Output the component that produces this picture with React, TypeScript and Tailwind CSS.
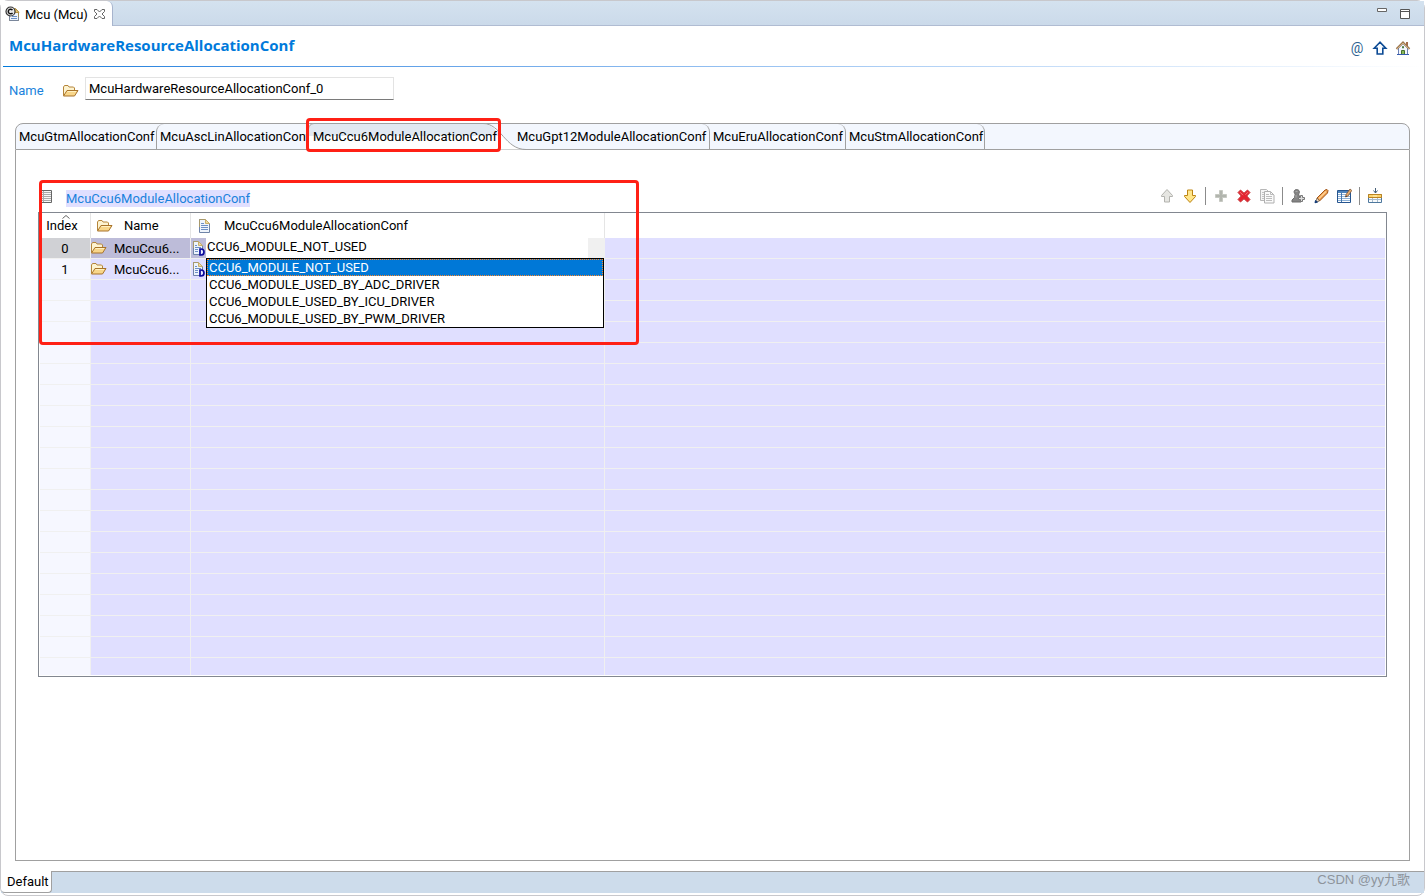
import { useState } from "react";
import type { ReactNode } from "react";

const usageOptions = [
  "CCU6_MODULE_NOT_USED",
  "CCU6_MODULE_USED_BY_ADC_DRIVER",
  "CCU6_MODULE_USED_BY_ICU_DRIVER",
  "CCU6_MODULE_USED_BY_PWM_DRIVER",
];

const emptyRows = Array.from({ length: 19 }, (_, i) => i + 2);

function Icon({ children, className = "" }: { children: ReactNode; className?: string }) {
  return (
    <svg
      viewBox="0 0 16 16"
      className={`h-4 w-4 shrink-0 ${className}`}
      fill="none"
      aria-hidden="true"
    >
      {children}
    </svg>
  );
}

function FolderIcon() {
  return (
    <Icon>
      <path d="M.5 12.500V4l1-1.500h3.500l1 1.500h4.500l1 1v2.500" fill="#fdf3d0" stroke="#b5853a" />
      <path d="M.5 13l3.500-5.500h11L11.500 13z" fill="#f8d68a" stroke="#a8732a" />
      <path d="M4.500 8.500h8.500" stroke="#fff0c0" />
    </Icon>
  );
}

function PageIcon() {
  return (
    <Icon>
      <path d="M2.500 1.500h6l4 4v9h-10z" fill="#eef4fc" stroke="#6f84a8" />
      <path d="M2.500 9v-7.500h6" stroke="#a8996c" />
      <path d="M8.500 1.500v4h4z" fill="#ecd9a0" stroke="#c8ae6b" />
      <path d="M4 5.500h3M4 7.500h7M4 9.500h7M4 11.500h7" stroke="#6d8fc4" />
    </Icon>
  );
}

function PageDefaultIcon() {
  return (
    <svg viewBox="0 0 15 16" className="h-4 w-[15px] shrink-0" fill="none" aria-hidden="true">
      <path d="M2.500 1.500h5l4 4v9h-9z" fill="#eef4fc" stroke="#6f84a8" />
      <path d="M2.500 8v-6.500h5" stroke="#a8996c" />
      <path d="M7.500 1.500v4h4z" fill="#ecd9a0" stroke="#c8ae6b" />
      <path d="M4 5.500h2M4 7.500h6M4 9.500h3M4 11.500h3" stroke="#6d8fc4" />
      <path d="M9 9h1c4 0 4 6 0 6H9z" fill="#e8ecff" stroke="#0a0a9c" strokeWidth="1.700" />
    </svg>
  );
}

function McuIcon() {
  return (
    <Icon>
      <path d="M4.500 2.500h6l3 3v9h-9z" fill="#eef4fb" stroke="#a08c55" />
      <path d="M4.500 8v6.500h9V11" stroke="#7a879c" />
      <path d="M10 2.500v4h4z" fill="#e7c873" stroke="#b8923f" />
      <path d="M7 10.500h5M6 12.500h6" stroke="#6a8fc6" />
      <circle cx="5.500" cy="5.500" r="4.500" fill="#e8e8e8" stroke="#333" strokeWidth="1.200" />
      <path d="M7.500 4.200a2.300 2.300 0 1 0 0 2.600" stroke="#111" strokeWidth="1.500" />
    </Icon>
  );
}

function CloseIcon() {
  return (
    <Icon>
      <path
        d="M3.500 3.500h2.500l2.500 2.500 2.500-2.500h2.500v2l-2.500 2.500 2.500 2.500v2h-2.500l-2.500-2.500-2.500 2.500h-2.500v-2l2.500-2.500-2.500-2.500z"
        stroke="#666"
      />
    </Icon>
  );
}

function HomeIcon() {
  return (
    <Icon>
      <path d="M3.500 8v6.500h9V8l-4.500-4.500z" fill="#f3f6fd" stroke="#6d82b5" />
      <path d="M11.500 2v4M12.500 2v5" stroke="#a26a4a" />
      <path d="M1.500 9L8 2.500 14.500 9" stroke="#9b7650" strokeWidth="2" />
      <path d="M2 9l6-6 6 6" stroke="#e0bf8d" strokeWidth=".8" />
      <path d="M7.500 6.500h1v1.500h-1z" fill="#6eac55" stroke="#4f7f45" />
      <path d="M6.500 10.500h3v4h-3z" fill="#89b957" stroke="#47712f" />
      <path d="M2 14.500h12" stroke="#365cae" />
    </Icon>
  );
}

function UpIcon() {
  return (
    <Icon>
      <path
        d="M8 2.200L2.200 8.300h3v5.700h5.600V8.300h3z"
        fill="#f7fbff"
        stroke="#0c4a94"
        strokeWidth="1.600"
      />
    </Icon>
  );
}

function MoveIcon({ down = false }: { down?: boolean }) {
  return (
    <Icon className={down ? "rotate-180" : ""}>
      <path
        d="M8 1.500L2.500 7.500v1h3v5.500h5V8.500h3v-1z"
        fill={down ? "#ffe68a" : "#e6e6e2"}
        stroke={down ? "#bd8412" : "#b3b3ae"}
      />
    </Icon>
  );
}

function PlusIcon() {
  return (
    <Icon>
      <path d="M6.500 2.500h3v4h4v3h-4v4h-3v-4h-4v-3h4z" fill="#b2b5ae" stroke="#c6c9c2" />
    </Icon>
  );
}

function DeleteIcon() {
  return (
    <Icon>
      <path
        d="M2 4.500L4.500 2 8 5.200 11.500 2 14 4.500 10.800 8 14 11.500 11.500 14 8 10.800 4.500 14 2 11.500 5.200 8z"
        fill="#e5232f"
        stroke="#c63a3d"
      />
      <path d="M4 4.200l3 3M12 4.200l-2.500 2.500" stroke="#f58080" />
    </Icon>
  );
}

function CopyIcon() {
  return (
    <Icon>
      <path d="M1.500 1.500h6l2 2v9h-8z" fill="#f5f5f5" stroke="#b7b7b7" />
      <path d="M3 4.500h3M3 6.500h3M3 8.500h3M3 10.500h3" stroke="#c4c4c4" />
      <path d="M5.500 3.500h6l3.500 3.500v8h-9.500z" fill="#fafafa" stroke="#b0b0b0" />
      <path d="M11.500 3.500v3h3M7 6.500h3M7 8.500h6M7 10.500h6M7 12.500h6" stroke="#bdbdbd" />
    </Icon>
  );
}

function PawnIcon() {
  return (
    <Icon>
      <path
        d="M6.500 1.500c3 0 3.800 3 2 4.500l1.500 4 1 1.500v2.500H2v-2l2.500-2.500.7-3.500C3.300 4.500 4 1.500 6.500 1.500z"
        fill="#858585"
        stroke="#6b6b6b"
      />
      <path d="M5.500 3.500h2M6 7v2.500" stroke="#ababab" />
      <path d="M10.500 7.500h2v2h2v2h-2v2h-2v-2h-2v-2h2z" fill="#ddd" stroke="#777" />
    </Icon>
  );
}

function PencilIcon() {
  return (
    <Icon>
      <path d="M4 10L12 2l2-.5 1 1L14.500 5l-8 8z" fill="#efa04d" stroke="#a2561c" />
      <path d="M6 10.500L13 3.500" stroke="#ffd29a" strokeWidth="1.300" />
      <path d="M4 10l2.500 3-4 1.500z" fill="#f2dfc5" stroke="#6b5239" strokeWidth=".7" />
      <path d="M2.500 12.500l2 1.500-2.500.8z" fill="#103a78" stroke="#103a78" />
    </Icon>
  );
}

function TableEditIcon() {
  return (
    <Icon>
      <path d="M1.500 2.500h13v12h-13z" fill="#fff" stroke="#26558f" />
      <path d="M2 3h12v2H2z" fill="#4d83bb" />
      <path d="M2 6.500h12M2 8.500h12M2 10.500h12M2 12.500h12" stroke="#8db2d8" />
      <path d="M5.500 5v9" stroke="#4476ad" />
      <path d="M9.500 9l.7-2.700L14 1l1.800 1.500L12 8z" fill="#e5ad70" stroke="#805738" strokeWidth=".8" />
      <path d="M9.500 9l.5-1.500 1 .8z" fill="#222" />
    </Icon>
  );
}

function InsertIcon() {
  return (
    <Icon>
      <path d="M8.500 0v5M6.500 2.500l2 2.500 2-2.500" stroke="#456078" />
      <path d="M1.500 6.500h13v8h-13z" fill="#f7fafc" stroke="#4e789e" />
      <path d="M5.500 10v4M10.500 10v4M2 11.500h12" stroke="#a9bccd" />
      <path d="M1.500 6.500h13v3h-13z" fill="#fbd36f" stroke="#bb8420" />
      <path d="M6 7.500h4v1H6z" fill="#fff0b8" />
    </Icon>
  );
}

function ListIcon() {
  return (
    <Icon>
      <path d="M1.500 2.500h11v12h-11z" fill="#f7f7f7" stroke="#666" />
      <path d="M2 4.500h10M2 6.500h10M2 8.500h10M2 10.500h10M2 12.500h10" stroke="#aaa" />
      <path d="M4.500 3v11" stroke="#aaa" />
    </Icon>
  );
}

function IconButton({ label, children }: { label: string; children: ReactNode }) {
  return (
    <button type="button" aria-label={label} className="flex h-4 w-4 items-center justify-center">
      {children}
    </button>
  );
}

function Divider() {
  return <span className="h-[18px] w-px bg-[#8b8b8b]" />;
}

function EditorTabBar() {
  return (
    <header className="flex h-[25px] border-b border-[#b0bcd2] bg-gradient-to-b from-[#d4e2ef] to-[#cbdaea]">
      <div className="-mb-px flex h-[25px] w-[112px] items-center rounded-tr-md border-r border-[#a7b4cd] bg-white pl-1 pt-px">
        <McuIcon />
        <span className="ml-1 w-[66px] whitespace-nowrap pt-0.5">Mcu (Mcu)</span>
        <IconButton label="Close">
          <CloseIcon />
        </IconButton>
      </div>
      <div className="ml-auto flex items-center gap-[7px] pr-[11px]">
        <IconButton label="Minimize">
          <Icon>
            <path d="M3.500 3.500h9v3h-9z" fill="#fff" stroke="#666" />
          </Icon>
        </IconButton>
        <IconButton label="Maximize">
          <Icon>
            <path d="M3.500 4.500h9v9h-9zM3.500 6.500h9" fill="#fff" stroke="#555" />
          </Icon>
        </IconButton>
      </div>
    </header>
  );
}

// Tabs left of the active one are rounded on the left, the ones after it on the right.
const tabs = [
  { label: "McuGtmAllocationConf", style: "w-[140px] rounded-tl-lg pl-[3px]" },
  { label: "McuAscLinAllocationConf", style: "w-[152px] rounded-tl-lg border-l pl-[3px]" },
  { label: "McuCcu6ModuleAllocationConf", style: "w-[193px] pl-[5px]" },
  { label: "McuGpt12ModuleAllocationConf", style: "w-[209px] rounded-tr-lg border-r pl-4" },
  { label: "McuEruAllocationConf", style: "w-[136px] rounded-tr-lg border-r pl-[3px]" },
  { label: "McuStmAllocationConf", style: "w-[139px] rounded-tr-lg border-r pl-[3px]" },
];

function TabStrip() {
  return (
    <div
      role="tablist"
      className="flex h-[27px] rounded-t-lg border border-[#a0a0a0] bg-[#f3f7fe]"
    >
      {tabs.map((tab, i) => (
        <button
          key={tab.label}
          type="button"
          role="tab"
          aria-selected={i === 2}
          className={`relative h-[25px] shrink-0 whitespace-nowrap border-[#a0a0a0] text-left ${tab.style}`}
        >
          {i === 2 && (
            <>
              <svg
                viewBox="0 0 218 27"
                className="absolute -top-px left-0 h-[27px] w-[218px]"
                fill="none"
                aria-hidden="true"
              >
                <path d="M0 27V6Q1 1 6 .5h169c18 0 22 26 43 26z" fill="#fff" />
                <path d="M1 13V6Q2 1 6 1h169c8 0 13 6 17 12z" fill="#e1e8f1" />
                <path d="M.5 26V6Q1 1 6 .5h169c18 0 22 26 43 26" stroke="#a0a0a0" />
              </svg>
              <span className="absolute -left-0.5 -top-1.5 h-[34px] w-[195px] rounded-sm border-3 border-[#ff2015]" />
            </>
          )}
          <span className="relative">{tab.label}</span>
        </button>
      ))}
    </div>
  );
}

function TableToolbar() {
  return (
    <div className="ml-auto flex items-center gap-[7px] pr-1">
      <IconButton label="Move up">
        <MoveIcon />
      </IconButton>
      <IconButton label="Move down">
        <MoveIcon down />
      </IconButton>
      <Divider />
      <IconButton label="Add">
        <PlusIcon />
      </IconButton>
      <IconButton label="Delete">
        <DeleteIcon />
      </IconButton>
      <IconButton label="Copy">
        <CopyIcon />
      </IconButton>
      <Divider />
      <IconButton label="Add user value">
        <PawnIcon />
      </IconButton>
      <IconButton label="Edit">
        <PencilIcon />
      </IconButton>
      <IconButton label="Edit table">
        <TableEditIcon />
      </IconButton>
      <Divider />
      <IconButton label="Insert column">
        <InsertIcon />
      </IconButton>
    </div>
  );
}

function UsageSelect() {
  const [usage, setUsage] = useState(usageOptions[0]);

  return (
    <div className="relative flex h-5 flex-1 bg-white">
      <select
        aria-label="Module usage"
        value={usage}
        onChange={(e) => setUsage(e.target.value)}
        className="h-[18px] flex-1 appearance-none bg-white pl-px outline-none"
      >
        {usageOptions.map((option) => (
          <option key={option}>{option}</option>
        ))}
      </select>
      <span className="w-4 bg-[#f0f0f0]" />
      <ul
        role="listbox"
        aria-label="Module usage options"
        className="absolute left-0 right-0 top-5 z-10 border border-black bg-white"
      >
        {usageOptions.map((option) => (
          <li
            key={option}
            role="option"
            aria-selected={option === usage}
            onClick={() => setUsage(option)}
            className={`h-[17px] border border-dotted pl-px leading-[15px] ${
              option === usage
                ? "border-[#ff8728] bg-[#0078d7] text-white"
                : "border-transparent"
            }`}
          >
            {option}
          </li>
        ))}
      </ul>
    </div>
  );
}

function AllocationTable() {
  return (
    <div className="border border-[#828790] bg-white px-px pb-px">
      <table className="w-full table-fixed border-separate border-spacing-0">
        <colgroup>
          <col className="w-[51px]" />
          <col className="w-[100px]" />
          <col className="w-[414px]" />
          <col />
        </colgroup>
        <thead>
          <tr className="h-[25px]">
            <th className="relative border-r border-[#e5e5e5] p-0 text-center font-normal">
              <svg
                viewBox="0 0 8 4"
                className="absolute left-[22px] top-0.5 h-1 w-2"
                fill="none"
                aria-hidden="true"
              >
                <path d="M.5 3.500L4 .5l3.500 3" stroke="#666" />
              </svg>
              <span className="pr-1.5">Index</span>
            </th>
            <th className="border-r border-[#e5e5e5] p-0 font-normal">
              <div className="flex items-center gap-[11px] pl-1.5">
                <FolderIcon />
                Name
              </div>
            </th>
            <th className="border-r border-[#e5e5e5] p-0 font-normal">
              <div className="flex items-center gap-[11px] pl-1.5">
                <PageIcon />
                McuCcu6ModuleAllocationConf
              </div>
            </th>
            <th className="p-0" />
          </tr>
        </thead>
        <tbody className="bg-[#e0dfff]">
          <tr className="h-[21px]">
            <td className="border-b border-r border-[#f0f0f0] bg-[#d0d1d5] p-0 pt-0.5 text-center">
              0
            </td>
            <td className="border-b border-r border-[#f0f0f0] bg-[#bdbcd9] p-0">
              <div className="flex h-5 items-center gap-[7px]">
                <FolderIcon />
                <span className="pt-0.5">McuCcu6...</span>
              </div>
            </td>
            <td className="border-b border-r border-[#f0f0f0] bg-[#bdbcd9] p-0">
              <div className="flex h-5 items-center">
                <PageDefaultIcon />
                <UsageSelect />
              </div>
            </td>
            <td className="border-b border-[#f0f0f0] p-0" />
          </tr>
          <tr className="h-[21px]">
            <td className="border-b border-r border-[#f0f0f0] bg-[#f6f7ff] p-0 pt-0.5 text-center">
              1
            </td>
            <td className="border-b border-r border-[#f0f0f0] p-0">
              <div className="flex h-5 items-center gap-[7px]">
                <FolderIcon />
                <span className="pt-0.5">McuCcu6...</span>
              </div>
            </td>
            <td className="border-b border-r border-[#f0f0f0] p-0">
              <PageDefaultIcon />
            </td>
            <td className="border-b border-[#f0f0f0] p-0" />
          </tr>
          {emptyRows.map((row) => (
            <tr key={row} className="h-[21px] last:h-[17px] last:*:border-b-0">
              <td className="border-b border-r border-[#f0f0f0] bg-[#f6f7ff] p-0" />
              <td className="border-b border-r border-[#f0f0f0] p-0" />
              <td className="border-b border-r border-[#f0f0f0] p-0" />
              <td className="border-b border-[#f0f0f0] p-0" />
            </tr>
          ))}
        </tbody>
      </table>
    </div>
  );
}

export default function App() {
  return (
    <div className="flex min-h-screen flex-col rounded-lg border border-[#c8c8cc] bg-white font-['Roboto','Noto_Sans_CJK_SC',sans-serif] text-[13px] leading-[18px] text-black">
      <EditorTabBar />

      <main className="flex flex-1 flex-col">
        <div className="flex h-10 items-center pl-2 pr-[13px]">
          <h1 className="pb-0.5 font-['Open_Sans',sans-serif] text-[15px] leading-5 font-bold text-[#007adb]">
            McuHardwareResourceAllocationConf
          </h1>
          <div className="ml-auto flex gap-[7px] pt-1">
            <button
              type="button"
              aria-label="Annotations"
              className="h-4 w-4 text-sm leading-4 text-[#2b6291]"
            >
              @
            </button>
            <IconButton label="Up">
              <UpIcon />
            </IconButton>
            <IconButton label="Home">
              <HomeIcon />
            </IconButton>
          </div>
        </div>
        <div className="ml-0.5 h-px bg-gradient-to-r from-[#007adb] to-white" />

        <div className="flex items-center pl-2 pt-2.5">
          <label htmlFor="container-name" className="w-[54px] pt-1 text-[#1a82dc]">
            Name
          </label>
          <span className="pt-1">
            <FolderIcon />
          </span>
          <input
            id="container-name"
            defaultValue="McuHardwareResourceAllocationConf_0"
            className="ml-1.5 h-[23px] w-[309px] border border-[#e3e3e3] border-b-[#7a7a7a] px-[3px] outline-none"
          />
        </div>

        <div className="mx-3.5 mb-2.5 mt-[23px] flex flex-1 flex-col">
          <TabStrip />
          <section className="flex-1 border border-t-0 border-[#a0a0a0] px-[22px] pt-[30px]">
            <div className="relative">
              <div className="flex h-8 items-center pl-px">
                <ListIcon />
                <h2 className="ml-[11px] mt-1 bg-[#e0dfff] leading-[17px] text-[#1a82dc]">
                  McuCcu6ModuleAllocationConf
                </h2>
                <TableToolbar />
              </div>
              <AllocationTable />
              <div className="pointer-events-none absolute left-px top-0 z-20 h-[165px] w-[600px] rounded-sm border-3 border-[#ff2015]" />
            </div>
          </section>
        </div>
      </main>

      <footer className="mb-0.5 flex h-[22px] bg-[#cddceb]">
        <button
          type="button"
          className="w-[51px] rounded-b border-b border-r border-[#a0a0a0] bg-white pl-1.5 text-left"
        >
          Default
        </button>
        <div className="flex flex-1 justify-end border-t border-[#a0a0a0] pr-3.5">
          <span className="font-['Liberation_Sans','Noto_Sans_CJK_SC',sans-serif] text-[13px] leading-[15px] text-[#8d949c]">
            CSDN @yy九歌
          </span>
        </div>
      </footer>
    </div>
  );
}
